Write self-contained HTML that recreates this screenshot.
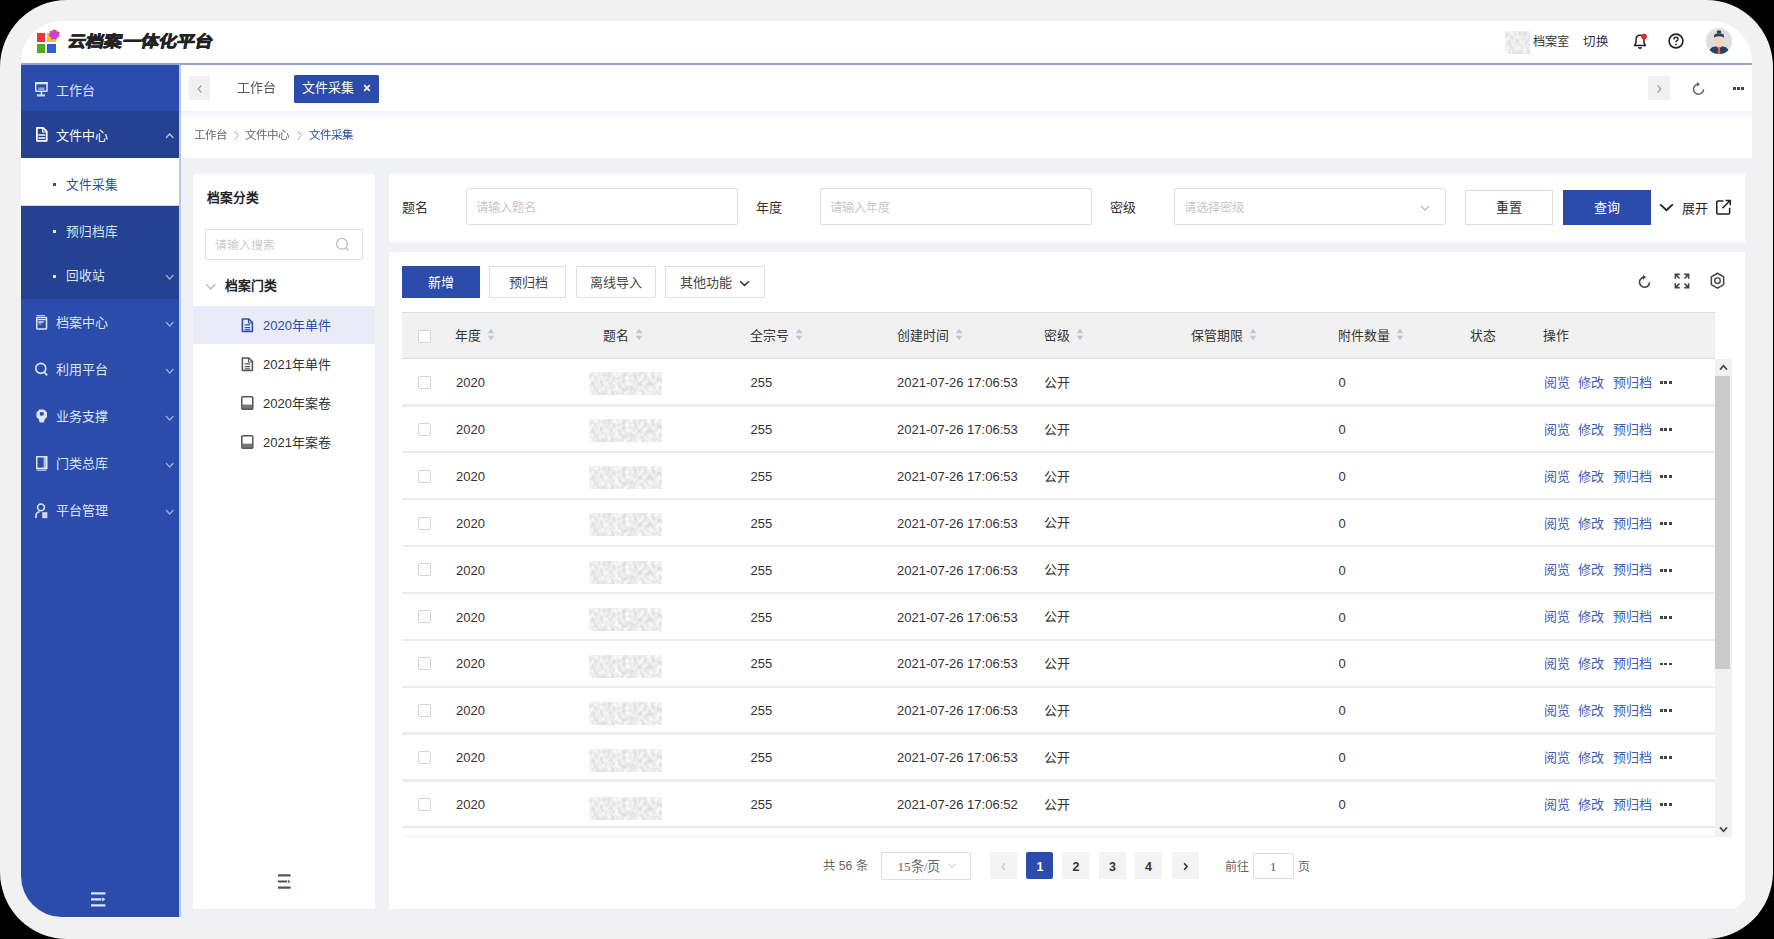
<!DOCTYPE html>
<html lang="zh-CN"><head><meta charset="utf-8"><title>云档案一体化平台</title>
<style>
html,body{margin:0;padding:0;background:#000;}
body{width:1774px;height:939px;overflow:hidden;position:relative;font-family:"Liberation Sans", sans-serif;}
#frame{position:absolute;left:0;top:0;width:1773px;height:939px;background:#f1f1f1;border-radius:67px;overflow:hidden;}
#app{position:absolute;left:21px;top:21px;width:1731px;height:896px;border-radius:41px;overflow:hidden;background:#f0f1f5;}
#abs{position:absolute;left:-21px;top:-21px;width:1774px;height:939px;filter:blur(0.55px);}
#abs div,#abs svg{position:absolute;}
#abs svg{overflow:visible;display:block;}
.t{white-space:nowrap;}
</style></head><body>
<div id="frame"><div id="app"><div id="abs">
<div style="left:21px;top:21px;width:1731px;height:42px;background:#fff"></div>
<div style="left:21px;top:63px;width:1731px;height:2.299999999999997px;background:#94a3d8"></div>
<div style="left:36.5px;top:33px;width:8.5px;height:9.200000000000003px;background:#e8363a"></div>
<div style="left:47px;top:33px;width:8.799999999999997px;height:9.200000000000003px;background:#fbc611"></div>
<div style="left:36.5px;top:43.7px;width:8.5px;height:9.0px;background:#4fae1e"></div>
<div style="left:47px;top:43.7px;width:8.799999999999997px;height:9.0px;background:#2f5fd0"></div>
<svg style="left:48.3px;top:29.200000000000003px;" width="12" height="12" viewBox="0 0 12 12"><path d="M6 0.6 L8 1.6 L10.2 1.2 L10.6 3.6 L11.6 5.6 L10 7.4 L9.6 9.8 L7.2 9.8 L5 11.2 L3.4 9.2 L1 8.4 L1.6 6 L0.6 3.8 L2.8 2.8 L3.8 0.8 Z" fill="#d63bd0" transform="rotate(20 6 6)"/></svg>
<div class="t" style="left:67.5px;top:29.799999999999997px;height:24px;line-height:24px;font-size:16px;color:#222;font-weight:900;letter-spacing:0;-webkit-text-stroke:0.7px #222;transform:skewX(-11deg) scaleX(1.135);transform-origin:0 50%;">云档案一体化平台</div>
<svg style="left:1505px;top:31px" width="25" height="23"><rect width="25" height="23" fill="#eee" filter="url(#nz)"/></svg>
<div class="t" style="left:1532.6px;top:31.799999999999997px;height:20px;line-height:20px;font-size:12.2px;color:#333;">档案室</div>
<div class="t" style="left:1583px;top:31.6px;height:20px;line-height:20px;font-size:12.5px;color:#333;">切换</div>
<svg style="left:1631.5px;top:32.5px;" width="16" height="18" viewBox="0 0 16 18"><path d="M8 2.2 C5.2 2.2 4 4.4 4 7 L4 10.2 L2.4 12.6 L13.6 12.6 L12 10.2 L12 7 C12 4.4 10.8 2.2 8 2.2 Z" fill="none" stroke="#222" stroke-width="1.5" stroke-linejoin="round"/><path d="M6.5 14.3 Q8 16.2 9.5 14.3" fill="none" stroke="#222" stroke-width="1.4"/><circle cx="12" cy="3.6" r="2.9" fill="#f5222d"/></svg>
<svg style="left:1666.6px;top:32.2px;" width="18" height="18" viewBox="0 0 18 18"><circle cx="9" cy="9" r="6.9" fill="none" stroke="#222" stroke-width="1.6"/><path d="M6.9 7.4 Q6.9 5.3 9 5.3 Q11.1 5.3 11.1 7.2 Q11.1 8.4 9 9.3 L9 10.3" fill="none" stroke="#222" stroke-width="1.4"/><circle cx="9" cy="12.3" r="0.9" fill="#222"/></svg>
<svg style="left:1705.4px;top:27.200000000000003px;" width="28" height="28" viewBox="0 0 28 28"><defs><clipPath id="av"><circle cx="14" cy="14" r="13.1"/></clipPath></defs>
<circle cx="14" cy="14" r="13.1" fill="#dddee1"/>
<g clip-path="url(#av)">
<path d="M4.2 27 Q3.6 20.4 9.6 19.4 L18.4 19.4 Q24.4 20.4 23.8 27 Z" fill="#26425f"/>
<path d="M11.4 18.6 L14 22.6 L16.6 18.6 Z" fill="#e8ecf0"/>
<path d="M13.2 19.8 L14.8 19.8 L15.3 26.6 L14 27.6 L12.7 26.6 Z" fill="#ef5a62"/>
<rect x="12.1" y="15" width="3.8" height="4.6" fill="#f5c8ad"/>
<rect x="9.2" y="8.4" width="9.6" height="9.4" rx="3.6" fill="#fbd3bc"/>
<path d="M9 11 L9 9 Q9 6.2 14 6.2 Q19 6.2 19 9 L19 11 Q18.4 9.2 14 9.2 Q9.6 9.2 9 11 Z" fill="#26425f"/>
<rect x="11.9" y="3.6" width="4.2" height="2.6" rx="1" fill="#26425f"/>
</g></svg>
<div style="left:21px;top:65px;width:158px;height:852px;background:#2b4cab"></div>
<div style="left:179px;top:65px;width:2.1999999999999886px;height:852px;background:#bcc5ea"></div>
<div style="left:21px;top:111px;width:158px;height:47px;background:#254192"></div>
<div style="left:21px;top:158px;width:158px;height:46.5px;background:#fff"></div>
<div style="left:21px;top:204.5px;width:158px;height:1.5px;background:#d3d9ee"></div>
<div style="left:21px;top:206px;width:158px;height:93px;background:#254192"></div>
<div class="t" style="left:56px;top:81.0px;height:20px;line-height:20px;font-size:13px;color:#dfe5f8;">工作台</div>
<div class="t" style="left:56px;top:125.69999999999999px;height:20px;line-height:20px;font-size:13px;color:#fff;">文件中心</div>
<svg style="left:165.3px;top:132.5px;" width="9.4" height="6" viewBox="0 0 9.4 6"><path d="M1 5 L4.7 1 L8.4 5" fill="none" stroke="#c3cbea" stroke-width="1.2"/></svg>
<div class="t" style="left:66px;top:174.8px;height:20px;line-height:20px;font-size:12.7px;color:#2b4cab;">文件采集</div>
<div style="left:52.6px;top:183px;width:3.0px;height:3px;background:#2b4cab"></div>
<div class="t" style="left:66px;top:221.7px;height:20px;line-height:20px;font-size:12.7px;color:#dfe5f8;">预归档库</div>
<div style="left:52.6px;top:229.5px;width:3.0px;height:3.0px;background:#e8ecf8"></div>
<div class="t" style="left:66px;top:266.2px;height:20px;line-height:20px;font-size:12.7px;color:#dfe5f8;">回收站</div>
<div style="left:52.6px;top:274.5px;width:3.0px;height:3.0px;background:#e8ecf8"></div>
<svg style="left:165.3px;top:274.0px;" width="9.4" height="6" viewBox="0 0 9.4 6"><path d="M1 1 L4.7 5 L8.4 1" fill="none" stroke="#a3afdc" stroke-width="1.2"/></svg>
<div class="t" style="left:56px;top:312.9px;height:20px;line-height:20px;font-size:13px;color:#dfe5f8;">档案中心</div>
<svg style="left:165.3px;top:320.9px;" width="9.4" height="6" viewBox="0 0 9.4 6"><path d="M1 1 L4.7 5 L8.4 1" fill="none" stroke="#a3afdc" stroke-width="1.2"/></svg>
<div class="t" style="left:56px;top:360.0px;height:20px;line-height:20px;font-size:13px;color:#dfe5f8;">利用平台</div>
<svg style="left:165.3px;top:368.0px;" width="9.4" height="6" viewBox="0 0 9.4 6"><path d="M1 1 L4.7 5 L8.4 1" fill="none" stroke="#a3afdc" stroke-width="1.2"/></svg>
<div class="t" style="left:56px;top:407.0px;height:20px;line-height:20px;font-size:13px;color:#dfe5f8;">业务支撑</div>
<svg style="left:165.3px;top:415.0px;" width="9.4" height="6" viewBox="0 0 9.4 6"><path d="M1 1 L4.7 5 L8.4 1" fill="none" stroke="#a3afdc" stroke-width="1.2"/></svg>
<div class="t" style="left:56px;top:454.0px;height:20px;line-height:20px;font-size:13px;color:#dfe5f8;">门类总库</div>
<svg style="left:165.3px;top:462.0px;" width="9.4" height="6" viewBox="0 0 9.4 6"><path d="M1 1 L4.7 5 L8.4 1" fill="none" stroke="#a3afdc" stroke-width="1.2"/></svg>
<div class="t" style="left:56px;top:500.6px;height:20px;line-height:20px;font-size:13px;color:#dfe5f8;">平台管理</div>
<svg style="left:165.3px;top:508.6px;" width="9.4" height="6" viewBox="0 0 9.4 6"><path d="M1 1 L4.7 5 L8.4 1" fill="none" stroke="#a3afdc" stroke-width="1.2"/></svg>
<svg style="left:35px;top:82px" width="12.8" height="14.7" viewBox="0 0 12.8 14.7"><rect x="0.75" y="0.75" width="11.3" height="8.6" rx="0.6" fill="none" stroke="#dfe5f8" stroke-width="1.5"/><rect x="0" y="0" width="12.8" height="2.3" fill="#dfe5f8"/><rect x="3.4" y="5.4" width="6" height="2.6" fill="#dfe5f8" opacity=".55"/><path d="M6.4 9.6 L6.4 12.6" stroke="#dfe5f8" stroke-width="1.5"/><rect x="1.9" y="12.3" width="8" height="2.2" fill="#dfe5f8" opacity=".9"/></svg>
<svg style="left:35.6px;top:127.3px" width="11.6" height="14.7" viewBox="0 0 11.6 14.7"><path d="M0.9 0.9 L7.2 0.9 L10.7 4.4 L10.7 13.8 L0.9 13.8 Z" fill="none" stroke="#fff" stroke-width="1.8" stroke-linejoin="round"/><path d="M2.4 8 L9.2 8 M2.4 10.9 L9.2 10.9" stroke="#fff" stroke-width="1.5"/><path d="M6.6 0.9 L6.6 5 L10.7 5" fill="none" stroke="#fff" stroke-width="1.2"/></svg>
<svg style="left:35.7px;top:315.2px" width="11.3" height="14.7" viewBox="0 0 11.3 14.7"><rect x="0.75" y="2.5" width="9.8" height="11.4" rx="0.6" fill="none" stroke="#dfe5f8" stroke-width="1.5"/><path d="M0.6 0.6 L9 0.6" stroke="#dfe5f8" stroke-width="1.2" opacity=".8"/><path d="M1.4 4.6 L9.9 4.6 M2.4 7 L7.6 7" stroke="#dfe5f8" stroke-width="1.3"/><path d="M2.4 9 L6 9" stroke="#dfe5f8" stroke-width="1" opacity=".7"/></svg>
<svg style="left:35px;top:362.1px" width="12.6" height="13.9" viewBox="0 0 12.6 13.9"><circle cx="5.8" cy="6.4" r="5" fill="none" stroke="#dfe5f8" stroke-width="1.6"/><path d="M9.4 10.4 L12.2 13.4" stroke="#dfe5f8" stroke-width="1.7"/></svg>
<svg style="left:35.7px;top:409.4px" width="11.5" height="14.1" viewBox="0 0 11.5 14.1"><path d="M3.4 0.6 L8.1 0.6 L11 3.4 L11 8 L8.4 10.8 L8.4 12 L7.6 13.6 L3.9 13.6 L3.1 12 L3.1 10.8 L0.5 8 L0.5 3.4 Z" fill="#dfe5f8"/><rect x="3.9" y="3.2" width="3.7" height="3.3" fill="#2b4cab"/></svg>
<svg style="left:35.7px;top:455.9px" width="11.5" height="15" viewBox="0 0 11.5 15"><rect x="0.75" y="0.75" width="10" height="11.6" fill="none" stroke="#dfe5f8" stroke-width="1.5"/><rect x="7.6" y="0.8" width="3.4" height="11.4" fill="#dfe5f8" opacity=".75"/><path d="M0.6 13 L10.8 13" stroke="#dfe5f8" stroke-width="1.1" opacity=".8"/><path d="M0.8 14.5 L10.4 14.5" stroke="#dfe5f8" stroke-width="1" opacity=".7"/></svg>
<svg style="left:35.2px;top:502.9px" width="12.4" height="15.2" viewBox="0 0 12.4 15.2"><circle cx="6" cy="4.4" r="3.4" fill="none" stroke="#dfe5f8" stroke-width="1.6"/><path d="M0.9 15 L0.9 13.4 Q0.9 9.4 4.6 8.8" fill="none" stroke="#dfe5f8" stroke-width="1.6"/><rect x="7.2" y="9.2" width="5.2" height="6" fill="#dfe5f8" opacity=".9"/></svg>
<svg style="left:90.89999999999999px;top:892.2px;" width="14.4" height="14.6" viewBox="0 0 14.4 14.6"><path d="M0 1.3 L14.4 1.3 M0 7.3 L10.4 7.3 M0 13.3 L14.4 13.3" stroke="#dfe5f8" stroke-width="2.3"/><path d="M11.2 5.2 L14.4 7.3 L11.2 9.4 Z" fill="#dfe5f8"/></svg>
<div style="left:181px;top:65px;width:1571px;height:47px;background:#fff"></div>
<div style="left:181px;top:111px;width:1571px;height:9px;background:linear-gradient(#f1f3f9,#f6f7fb 45%,#fff)"></div>
<div style="left:181px;top:120px;width:1571px;height:38px;background:#fff"></div>
<div style="left:189px;top:76px;width:21px;height:24px;background:#f0f0f0"></div>
<svg style="left:196.0px;top:83.5px;" width="8" height="10" viewBox="0 0 8 10"><path d="M5.4 1.4 L2.2 5 L5.4 8.6" fill="none" stroke="#9a9a9a" stroke-width="1.2"/></svg>
<div class="t" style="left:237px;top:78.4px;height:20px;line-height:20px;font-size:13px;color:#555;">工作台</div>
<div style="left:294px;top:75px;width:85px;height:27.5px;background:#2b4cab;border-radius:1.5px"></div>
<div class="t" style="left:302px;top:78.1px;height:20px;line-height:20px;font-size:13px;color:#fff;">文件采集</div>
<svg style="left:362.5px;top:84.2px;" width="8" height="8" viewBox="0 0 8 8"><path d="M1.2 1.2 L6.8 6.8 M6.8 1.2 L1.2 6.8" stroke="#fff" stroke-width="1.7"/></svg>
<div style="left:1648px;top:76px;width:22px;height:24px;background:#f0f0f0"></div>
<svg style="left:1655.0px;top:83.5px;" width="8" height="10" viewBox="0 0 8 10"><path d="M2.6 1.4 L5.8 5 L2.6 8.6" fill="none" stroke="#9a9a9a" stroke-width="1.2"/></svg>
<svg style="left:1691.0px;top:80.6px;" width="15" height="15" viewBox="0 0 14 14"><path d="M7.6 3 A4.7 4.7 0 1 0 11.7 7.6" fill="none" stroke="#666" stroke-width="1.4"/><path d="M5.6 0.6 L8.4 3 L5.6 5.4 Z" fill="#666"/></svg>
<div style="left:1732.5px;top:87.2px;width:3.2000000000000455px;height:2.3999999999999915px;background:#444"></div>
<div style="left:1736.9px;top:87.2px;width:3.199999999999818px;height:2.3999999999999915px;background:#444"></div>
<div style="left:1741.3px;top:87.2px;width:3.2000000000000455px;height:2.3999999999999915px;background:#444"></div>
<div class="t" style="left:193.5px;top:125.30000000000001px;height:20px;line-height:20px;font-size:11.5px;color:#666;">工作台</div>
<svg style="left:232.5px;top:129.8px;" width="7" height="11" viewBox="0 0 7 11"><path d="M1.4 1 L5.4 5.5 L1.4 10" fill="none" stroke="#aaa" stroke-width="1"/></svg>
<div class="t" style="left:245px;top:125.30000000000001px;height:20px;line-height:20px;font-size:11.5px;color:#666;">文件中心</div>
<svg style="left:295.5px;top:129.8px;" width="7" height="11" viewBox="0 0 7 11"><path d="M1.4 1 L5.4 5.5 L1.4 10" fill="none" stroke="#aaa" stroke-width="1"/></svg>
<div class="t" style="left:309px;top:125.30000000000001px;height:20px;line-height:20px;font-size:11.5px;color:#2b4cab;">文件采集</div>
<div style="left:181px;top:158px;width:1571px;height:759px;background:#f0f1f5"></div>
<div style="left:193.4px;top:174px;width:181.6px;height:735px;background:#fff"></div>
<div class="t" style="left:206.6px;top:188.0px;height:20px;line-height:20px;font-size:12.7px;color:#222;font-weight:bold">档案分类</div>
<div style="left:205.2px;top:229.2px;width:157.5px;height:30.900000000000034px;background:#fff;border:1.6px solid #e0e0e0;box-sizing:border-box;border-radius:2px"></div>
<div class="t" style="left:214.9px;top:234.6px;height:20px;line-height:20px;font-size:11.9px;color:#cbcbcb;">请输入搜索</div>
<svg style="left:335.0px;top:237.1px;" width="15" height="15" viewBox="0 0 15 15"><circle cx="7" cy="6.8" r="5.4" fill="none" stroke="#bdbdbd" stroke-width="1.3"/><path d="M10.8 10.8 L13.4 13.4" stroke="#bdbdbd" stroke-width="1.4"/></svg>
<svg style="left:205.4px;top:282.5px;" width="11.4" height="7" viewBox="0 0 11.4 7"><path d="M1 1 L5.7 6 L10.4 1" fill="none" stroke="#aaa" stroke-width="1.1"/></svg>
<div class="t" style="left:225.2px;top:276.1px;height:20px;line-height:20px;font-size:12.8px;color:#222;font-weight:bold">档案门类</div>
<div style="left:193.4px;top:305.5px;width:181.6px;height:38.19999999999999px;background:#e9ecf7"></div>
<svg style="left:241.2px;top:317.7px;" width="12.8" height="14.6" viewBox="0 0 12 14"><path d="M1.2 1 L7.4 1 L10.8 4.4 L10.8 13 L1.2 13 Z" fill="none" stroke="#2b4cab" stroke-width="1.5" stroke-linejoin="round"/><path d="M3.4 6.6 L8.6 6.6 M3.4 9.2 L8.6 9.2 M3.4 11.4 L8.6 11.4" stroke="#2b4cab" stroke-width="1.1"/><path d="M7 1 L7 4.8 L10.8 4.8" fill="none" stroke="#2b4cab" stroke-width="1"/></svg>
<div class="t" style="left:263px;top:315.6px;height:20px;line-height:20px;font-size:13px;color:#2b4cab;">2020年单件</div>
<svg style="left:241.2px;top:356.7px;" width="12.8" height="14.6" viewBox="0 0 12 14"><path d="M1.2 1 L7.4 1 L10.8 4.4 L10.8 13 L1.2 13 Z" fill="none" stroke="#555" stroke-width="1.5" stroke-linejoin="round"/><path d="M3.4 6.6 L8.6 6.6 M3.4 9.2 L8.6 9.2 M3.4 11.4 L8.6 11.4" stroke="#555" stroke-width="1.1"/><path d="M7 1 L7 4.8 L10.8 4.8" fill="none" stroke="#555" stroke-width="1"/></svg>
<div class="t" style="left:263px;top:354.6px;height:20px;line-height:20px;font-size:13px;color:#333;">2021年单件</div>
<svg style="left:241.29999999999998px;top:396.0px;" width="12.6" height="14" viewBox="0 0 12.6 14"><rect x="0.8" y="0.8" width="11" height="12.4" rx="1" fill="none" stroke="#555" stroke-width="1.5"/><rect x="1.2" y="8.6" width="10.2" height="4.4" fill="#555" opacity=".8"/></svg>
<div class="t" style="left:263px;top:393.7px;height:20px;line-height:20px;font-size:13px;color:#333;">2020年案卷</div>
<svg style="left:241.29999999999998px;top:435.0px;" width="12.6" height="14" viewBox="0 0 12.6 14"><rect x="0.8" y="0.8" width="11" height="12.4" rx="1" fill="none" stroke="#555" stroke-width="1.5"/><rect x="1.2" y="8.6" width="10.2" height="4.4" fill="#555" opacity=".8"/></svg>
<div class="t" style="left:263px;top:432.6px;height:20px;line-height:20px;font-size:13px;color:#333;">2021年案卷</div>
<svg style="left:277.59999999999997px;top:873.7px;" width="12.6" height="15" viewBox="0 0 12.6 15"><path d="M0 1.3 L12.6 1.3 M0 7.5 L9 7.5 M0 13.7 L12.6 13.7" stroke="#555" stroke-width="2.2"/><path d="M9.8 5.4 L12.6 7.5 L9.8 9.6 Z" fill="#8a6a3a"/></svg>
<div style="left:388.5px;top:174px;width:1356.5px;height:67.5px;background:#fff"></div>
<div class="t" style="left:402px;top:198.0px;height:20px;line-height:20px;font-size:13px;color:#333;">题名</div>
<div style="left:465.5px;top:187.5px;width:272.0px;height:37.5px;background:#fff;border:1.6px solid #dedede;box-sizing:border-box;border-radius:2px"></div>
<div class="t" style="left:476px;top:198.0px;height:20px;line-height:20px;font-size:12.3px;color:#c8c8c8;">请输入题名</div>
<div class="t" style="left:755.8px;top:198.0px;height:20px;line-height:20px;font-size:13px;color:#333;">年度</div>
<div style="left:819.5px;top:187.5px;width:272.5px;height:37.5px;background:#fff;border:1.6px solid #dedede;box-sizing:border-box;border-radius:2px"></div>
<div class="t" style="left:830px;top:198.0px;height:20px;line-height:20px;font-size:12.3px;color:#c8c8c8;">请输入年度</div>
<div class="t" style="left:1109.8px;top:198.0px;height:20px;line-height:20px;font-size:13px;color:#333;">密级</div>
<div style="left:1174px;top:187.5px;width:271.5px;height:37.5px;background:#fff;border:1.6px solid #dedede;box-sizing:border-box;border-radius:2px"></div>
<div class="t" style="left:1184px;top:198.0px;height:20px;line-height:20px;font-size:12.3px;color:#c8c8c8;">请选择密级</div>
<svg style="left:1420.0px;top:204.8px;" width="10" height="6" viewBox="0 0 10 6"><path d="M1 1 L5.0 5 L9 1" fill="none" stroke="#b5b5b5" stroke-width="1.1"/></svg>
<div style="left:1464.5px;top:190px;width:88.5px;height:35px;background:#fff;border:1px solid #dcdcdc;box-sizing:border-box"></div>
<div class="t" style="left:1408.7px;width:200px;text-align:center;top:198.4px;height:20px;line-height:20px;font-size:13px;color:#333;">重置</div>
<div style="left:1563px;top:190px;width:88.29999999999995px;height:35px;background:#2b4cab"></div>
<div class="t" style="left:1507.2px;width:200px;text-align:center;top:198.4px;height:20px;line-height:20px;font-size:13px;color:#fff;">查询</div>
<svg style="left:1659.1px;top:203.1px;" width="15" height="9" viewBox="0 0 15 9"><path d="M1.2 1.4 L7.5 7.2 L13.8 1.4" fill="none" stroke="#222" stroke-width="1.8"/></svg>
<div class="t" style="left:1681.6px;top:199.0px;height:20px;line-height:20px;font-size:13px;color:#222;">展开</div>
<svg style="left:1715.0px;top:199.4px;" width="17" height="16.4" viewBox="0 0 16 16"><path d="M8 2 L2.6 2 Q1.4 2 1.4 3.2 L1.4 13.4 Q1.4 14.6 2.6 14.6 L12.8 14.6 Q14 14.6 14 13.4 L14 8.6" fill="none" stroke="#222" stroke-width="1.5"/><path d="M7 9 L14 2 M10 1.4 L14.6 1.4 L14.6 6" fill="none" stroke="#222" stroke-width="1.5"/></svg>
<div style="left:388.5px;top:252.2px;width:1356.5px;height:656.8px;background:#fff"></div>
<div style="left:402px;top:266.2px;width:77.5px;height:31.600000000000023px;background:#2b4cab"></div>
<div class="t" style="left:340.7px;width:200px;text-align:center;top:272.6px;height:20px;line-height:20px;font-size:13px;color:#fff;">新增</div>
<div style="left:489.3px;top:266.2px;width:77.19999999999999px;height:31.600000000000023px;background:#fff;border:1px solid #dddfe6;box-sizing:border-box;border-radius:1px"></div>
<div class="t" style="left:428px;width:200px;text-align:center;top:272.6px;height:20px;line-height:20px;font-size:13px;color:#444;">预归档</div>
<div style="left:576px;top:266.2px;width:80.29999999999995px;height:31.600000000000023px;background:#fff;border:1px solid #dddfe6;box-sizing:border-box;border-radius:1px"></div>
<div class="t" style="left:516.2px;width:200px;text-align:center;top:272.6px;height:20px;line-height:20px;font-size:13px;color:#444;">离线导入</div>
<div style="left:665px;top:266.2px;width:99.5px;height:31.600000000000023px;background:#fff;border:1px solid #dddfe6;box-sizing:border-box;border-radius:1px"></div>
<div class="t" style="left:679.5px;top:272.6px;height:20px;line-height:20px;font-size:13px;color:#444;">其他功能</div>
<svg style="left:739.3px;top:279.8px;" width="11" height="7" viewBox="0 0 11 7"><path d="M1 1.2 L5.5 5.4 L10 1.2" fill="none" stroke="#333" stroke-width="1.5"/></svg>
<svg style="left:1637.1px;top:273.5px;" width="15" height="15" viewBox="0 0 14 14"><path d="M7.6 3 A4.7 4.7 0 1 0 11.7 7.6" fill="none" stroke="#444" stroke-width="1.5"/><path d="M5.6 0.6 L8.4 3 L5.6 5.4 Z" fill="#444"/></svg>
<svg style="left:1673.6px;top:273.0px;" width="16" height="16" viewBox="0 0 14 14"><path d="M5.0 1.2 L1.2 1.2 L1.2 5.0 M1.2 1.2 L4.8 4.8" fill="none" stroke="#444" stroke-width="1.4"/><path d="M9.0 1.2 L12.8 1.2 L12.8 5.0 M12.8 1.2 L9.200000000000001 4.8" fill="none" stroke="#444" stroke-width="1.4"/><path d="M5.0 12.8 L1.2 12.8 L1.2 9.0 M1.2 12.8 L4.8 9.200000000000001" fill="none" stroke="#444" stroke-width="1.4"/><path d="M9.0 12.8 L12.8 12.8 L12.8 9.0 M12.8 12.8 L9.200000000000001 9.200000000000001" fill="none" stroke="#444" stroke-width="1.4"/></svg>
<svg style="left:1709.0px;top:272.3px;" width="17" height="17.4" viewBox="0 0 16 16"><path d="M8 1 L13.8 4.4 L13.8 11.6 L8 15 L2.2 11.6 L2.2 4.4 Z" fill="none" stroke="#444" stroke-width="1.4" stroke-linejoin="round"/><circle cx="8" cy="8" r="2.6" fill="none" stroke="#444" stroke-width="1.3"/></svg>
<div style="left:402px;top:312px;width:1313px;height:47px;background:#f1f1f1"></div>
<div style="left:402px;top:311.5px;width:1313px;height:1.5px;background:#dddddd"></div>
<div style="left:402px;top:357.6px;width:1313px;height:1.599999999999966px;background:#dcdcdc"></div>
<div style="left:418.3px;top:329.8px;width:13.0px;height:13.0px;background:#fff;border:1px solid #d4d4d4;box-sizing:border-box;border-radius:2px"></div>
<div class="t" style="left:455.2px;top:326.3px;height:20px;line-height:20px;font-size:12.9px;color:#333;">年度</div>
<svg style="left:487.4px;top:328.1px;" width="8" height="13" viewBox="0 0 8 13"><path d="M4 0.8 L7.4 5.2 L0.6 5.2 Z" fill="#c0c6d4"/><path d="M4 12.2 L7.4 7.8 L0.6 7.8 Z" fill="#c0c6d4"/></svg>
<div class="t" style="left:602.7px;top:326.3px;height:20px;line-height:20px;font-size:12.9px;color:#333;">题名</div>
<svg style="left:634.9px;top:328.1px;" width="8" height="13" viewBox="0 0 8 13"><path d="M4 0.8 L7.4 5.2 L0.6 5.2 Z" fill="#c0c6d4"/><path d="M4 12.2 L7.4 7.8 L0.6 7.8 Z" fill="#c0c6d4"/></svg>
<div class="t" style="left:749.7px;top:326.3px;height:20px;line-height:20px;font-size:12.9px;color:#333;">全宗号</div>
<svg style="left:794.9px;top:328.1px;" width="8" height="13" viewBox="0 0 8 13"><path d="M4 0.8 L7.4 5.2 L0.6 5.2 Z" fill="#c0c6d4"/><path d="M4 12.2 L7.4 7.8 L0.6 7.8 Z" fill="#c0c6d4"/></svg>
<div class="t" style="left:896.7px;top:326.3px;height:20px;line-height:20px;font-size:12.9px;color:#333;">创建时间</div>
<svg style="left:954.9px;top:328.1px;" width="8" height="13" viewBox="0 0 8 13"><path d="M4 0.8 L7.4 5.2 L0.6 5.2 Z" fill="#c0c6d4"/><path d="M4 12.2 L7.4 7.8 L0.6 7.8 Z" fill="#c0c6d4"/></svg>
<div class="t" style="left:1043.7px;top:326.3px;height:20px;line-height:20px;font-size:12.9px;color:#333;">密级</div>
<svg style="left:1075.9px;top:328.1px;" width="8" height="13" viewBox="0 0 8 13"><path d="M4 0.8 L7.4 5.2 L0.6 5.2 Z" fill="#c0c6d4"/><path d="M4 12.2 L7.4 7.8 L0.6 7.8 Z" fill="#c0c6d4"/></svg>
<div class="t" style="left:1190.7px;top:326.3px;height:20px;line-height:20px;font-size:12.9px;color:#333;">保管期限</div>
<svg style="left:1248.9px;top:328.1px;" width="8" height="13" viewBox="0 0 8 13"><path d="M4 0.8 L7.4 5.2 L0.6 5.2 Z" fill="#c0c6d4"/><path d="M4 12.2 L7.4 7.8 L0.6 7.8 Z" fill="#c0c6d4"/></svg>
<div class="t" style="left:1337.7px;top:326.3px;height:20px;line-height:20px;font-size:12.9px;color:#333;">附件数量</div>
<svg style="left:1395.9px;top:328.1px;" width="8" height="13" viewBox="0 0 8 13"><path d="M4 0.8 L7.4 5.2 L0.6 5.2 Z" fill="#c0c6d4"/><path d="M4 12.2 L7.4 7.8 L0.6 7.8 Z" fill="#c0c6d4"/></svg>
<div class="t" style="left:1470.2px;top:326.3px;height:20px;line-height:20px;font-size:12.9px;color:#333;">状态</div>
<div class="t" style="left:1542.7px;top:326.3px;height:20px;line-height:20px;font-size:12.9px;color:#333;">操作</div>
<svg width="0" height="0" style="left:0;top:0"><defs><filter id="nz" x="0" y="0" width="100%" height="100%" color-interpolation-filters="sRGB"><feTurbulence type="fractalNoise" baseFrequency="0.27 0.2" numOctaves="2" seed="7"/><feColorMatrix type="matrix" values="0.24 0 0 0 0.805  0.24 0 0 0 0.805  0.24 0 0 0 0.805  0 0 0 0 1"/></filter></defs></svg>
<div style="left:402px;top:404.4px;width:1313px;height:2.2000000000000455px;background:#ececec"></div>
<div style="left:418.3px;top:376.0px;width:13.0px;height:13.0px;background:#fff;border:1px solid #d4d4d4;box-sizing:border-box;border-radius:2px"></div>
<div class="t" style="left:456px;top:373.2px;height:20px;line-height:20px;font-size:13px;color:#333;">2020</div>
<svg style="left:589px;top:371.80px" width="73" height="23"><rect width="73" height="23" fill="#eeeeee" filter="url(#nz)"/></svg>
<div class="t" style="left:750.5px;top:373.2px;height:20px;line-height:20px;font-size:13px;color:#333;">255</div>
<div class="t" style="left:897px;top:373.2px;height:20px;line-height:20px;font-size:13px;color:#333;">2021-07-26 17:06:53</div>
<div class="t" style="left:1044px;top:372.8px;height:20px;line-height:20px;font-size:13px;color:#333;">公开</div>
<div class="t" style="left:1338.5px;top:373.2px;height:20px;line-height:20px;font-size:13px;color:#333;">0</div>
<div class="t" style="left:1543.7px;top:373.0px;height:20px;line-height:20px;font-size:13px;color:#3d5cb8;">阅览</div>
<div class="t" style="left:1578.3px;top:373.0px;height:20px;line-height:20px;font-size:13px;color:#3d5cb8;">修改</div>
<div class="t" style="left:1612.8px;top:373.0px;height:20px;line-height:20px;font-size:13px;color:#3d5cb8;">预归档</div>
<div style="left:1660.0px;top:381.4px;width:3.2000000000000455px;height:2.8000000000000114px;background:#444"></div>
<div style="left:1664.3px;top:381.4px;width:3.2000000000000455px;height:2.8000000000000114px;background:#444"></div>
<div style="left:1668.6px;top:381.4px;width:3.2000000000000455px;height:2.8000000000000114px;background:#444"></div>
<div style="left:402px;top:451.27px;width:1313px;height:2.2000000000000455px;background:#ececec"></div>
<div style="left:418.3px;top:422.87px;width:13.0px;height:13.0px;background:#fff;border:1px solid #d4d4d4;box-sizing:border-box;border-radius:2px"></div>
<div class="t" style="left:456px;top:420.07px;height:20px;line-height:20px;font-size:13px;color:#333;">2020</div>
<svg style="left:589px;top:419.00px" width="73" height="23"><rect width="73" height="23" fill="#eeeeee" filter="url(#nz)"/></svg>
<div class="t" style="left:750.5px;top:420.07px;height:20px;line-height:20px;font-size:13px;color:#333;">255</div>
<div class="t" style="left:897px;top:420.07px;height:20px;line-height:20px;font-size:13px;color:#333;">2021-07-26 17:06:53</div>
<div class="t" style="left:1044px;top:419.67px;height:20px;line-height:20px;font-size:13px;color:#333;">公开</div>
<div class="t" style="left:1338.5px;top:420.07px;height:20px;line-height:20px;font-size:13px;color:#333;">0</div>
<div class="t" style="left:1543.7px;top:419.87px;height:20px;line-height:20px;font-size:13px;color:#3d5cb8;">阅览</div>
<div class="t" style="left:1578.3px;top:419.87px;height:20px;line-height:20px;font-size:13px;color:#3d5cb8;">修改</div>
<div class="t" style="left:1612.8px;top:419.87px;height:20px;line-height:20px;font-size:13px;color:#3d5cb8;">预归档</div>
<div style="left:1660.0px;top:428.27px;width:3.2000000000000455px;height:2.8000000000000114px;background:#444"></div>
<div style="left:1664.3px;top:428.27px;width:3.2000000000000455px;height:2.8000000000000114px;background:#444"></div>
<div style="left:1668.6px;top:428.27px;width:3.2000000000000455px;height:2.8000000000000114px;background:#444"></div>
<div style="left:402px;top:498.14px;width:1313px;height:2.2000000000000455px;background:#ececec"></div>
<div style="left:418.3px;top:469.74px;width:13.0px;height:13.0px;background:#fff;border:1px solid #d4d4d4;box-sizing:border-box;border-radius:2px"></div>
<div class="t" style="left:456px;top:466.94px;height:20px;line-height:20px;font-size:13px;color:#333;">2020</div>
<svg style="left:589px;top:466.20px" width="73" height="23"><rect width="73" height="23" fill="#eeeeee" filter="url(#nz)"/></svg>
<div class="t" style="left:750.5px;top:466.94px;height:20px;line-height:20px;font-size:13px;color:#333;">255</div>
<div class="t" style="left:897px;top:466.94px;height:20px;line-height:20px;font-size:13px;color:#333;">2021-07-26 17:06:53</div>
<div class="t" style="left:1044px;top:466.54px;height:20px;line-height:20px;font-size:13px;color:#333;">公开</div>
<div class="t" style="left:1338.5px;top:466.94px;height:20px;line-height:20px;font-size:13px;color:#333;">0</div>
<div class="t" style="left:1543.7px;top:466.74px;height:20px;line-height:20px;font-size:13px;color:#3d5cb8;">阅览</div>
<div class="t" style="left:1578.3px;top:466.74px;height:20px;line-height:20px;font-size:13px;color:#3d5cb8;">修改</div>
<div class="t" style="left:1612.8px;top:466.74px;height:20px;line-height:20px;font-size:13px;color:#3d5cb8;">预归档</div>
<div style="left:1660.0px;top:475.14px;width:3.2000000000000455px;height:2.8000000000000114px;background:#444"></div>
<div style="left:1664.3px;top:475.14px;width:3.2000000000000455px;height:2.8000000000000114px;background:#444"></div>
<div style="left:1668.6px;top:475.14px;width:3.2000000000000455px;height:2.8000000000000114px;background:#444"></div>
<div style="left:402px;top:545.01px;width:1313px;height:2.2000000000000455px;background:#ececec"></div>
<div style="left:418.3px;top:516.6099999999999px;width:13.0px;height:13.0px;background:#fff;border:1px solid #d4d4d4;box-sizing:border-box;border-radius:2px"></div>
<div class="t" style="left:456px;top:513.81px;height:20px;line-height:20px;font-size:13px;color:#333;">2020</div>
<svg style="left:589px;top:513.40px" width="73" height="23"><rect width="73" height="23" fill="#eeeeee" filter="url(#nz)"/></svg>
<div class="t" style="left:750.5px;top:513.81px;height:20px;line-height:20px;font-size:13px;color:#333;">255</div>
<div class="t" style="left:897px;top:513.81px;height:20px;line-height:20px;font-size:13px;color:#333;">2021-07-26 17:06:53</div>
<div class="t" style="left:1044px;top:513.41px;height:20px;line-height:20px;font-size:13px;color:#333;">公开</div>
<div class="t" style="left:1338.5px;top:513.81px;height:20px;line-height:20px;font-size:13px;color:#333;">0</div>
<div class="t" style="left:1543.7px;top:513.6099999999999px;height:20px;line-height:20px;font-size:13px;color:#3d5cb8;">阅览</div>
<div class="t" style="left:1578.3px;top:513.6099999999999px;height:20px;line-height:20px;font-size:13px;color:#3d5cb8;">修改</div>
<div class="t" style="left:1612.8px;top:513.6099999999999px;height:20px;line-height:20px;font-size:13px;color:#3d5cb8;">预归档</div>
<div style="left:1660.0px;top:522.01px;width:3.2000000000000455px;height:2.7999999999999545px;background:#444"></div>
<div style="left:1664.3px;top:522.01px;width:3.2000000000000455px;height:2.7999999999999545px;background:#444"></div>
<div style="left:1668.6px;top:522.01px;width:3.2000000000000455px;height:2.7999999999999545px;background:#444"></div>
<div style="left:402px;top:591.88px;width:1313px;height:2.2000000000000455px;background:#ececec"></div>
<div style="left:418.3px;top:563.4799999999999px;width:13.0px;height:13.0px;background:#fff;border:1px solid #d4d4d4;box-sizing:border-box;border-radius:2px"></div>
<div class="t" style="left:456px;top:560.68px;height:20px;line-height:20px;font-size:13px;color:#333;">2020</div>
<svg style="left:589px;top:560.60px" width="73" height="23"><rect width="73" height="23" fill="#eeeeee" filter="url(#nz)"/></svg>
<div class="t" style="left:750.5px;top:560.68px;height:20px;line-height:20px;font-size:13px;color:#333;">255</div>
<div class="t" style="left:897px;top:560.68px;height:20px;line-height:20px;font-size:13px;color:#333;">2021-07-26 17:06:53</div>
<div class="t" style="left:1044px;top:560.28px;height:20px;line-height:20px;font-size:13px;color:#333;">公开</div>
<div class="t" style="left:1338.5px;top:560.68px;height:20px;line-height:20px;font-size:13px;color:#333;">0</div>
<div class="t" style="left:1543.7px;top:560.4799999999999px;height:20px;line-height:20px;font-size:13px;color:#3d5cb8;">阅览</div>
<div class="t" style="left:1578.3px;top:560.4799999999999px;height:20px;line-height:20px;font-size:13px;color:#3d5cb8;">修改</div>
<div class="t" style="left:1612.8px;top:560.4799999999999px;height:20px;line-height:20px;font-size:13px;color:#3d5cb8;">预归档</div>
<div style="left:1660.0px;top:568.88px;width:3.2000000000000455px;height:2.7999999999999545px;background:#444"></div>
<div style="left:1664.3px;top:568.88px;width:3.2000000000000455px;height:2.7999999999999545px;background:#444"></div>
<div style="left:1668.6px;top:568.88px;width:3.2000000000000455px;height:2.7999999999999545px;background:#444"></div>
<div style="left:402px;top:638.75px;width:1313px;height:2.2000000000000455px;background:#ececec"></div>
<div style="left:418.3px;top:610.3499999999999px;width:13.0px;height:13.0px;background:#fff;border:1px solid #d4d4d4;box-sizing:border-box;border-radius:2px"></div>
<div class="t" style="left:456px;top:607.55px;height:20px;line-height:20px;font-size:13px;color:#333;">2020</div>
<svg style="left:589px;top:607.80px" width="73" height="23"><rect width="73" height="23" fill="#eeeeee" filter="url(#nz)"/></svg>
<div class="t" style="left:750.5px;top:607.55px;height:20px;line-height:20px;font-size:13px;color:#333;">255</div>
<div class="t" style="left:897px;top:607.55px;height:20px;line-height:20px;font-size:13px;color:#333;">2021-07-26 17:06:53</div>
<div class="t" style="left:1044px;top:607.15px;height:20px;line-height:20px;font-size:13px;color:#333;">公开</div>
<div class="t" style="left:1338.5px;top:607.55px;height:20px;line-height:20px;font-size:13px;color:#333;">0</div>
<div class="t" style="left:1543.7px;top:607.3499999999999px;height:20px;line-height:20px;font-size:13px;color:#3d5cb8;">阅览</div>
<div class="t" style="left:1578.3px;top:607.3499999999999px;height:20px;line-height:20px;font-size:13px;color:#3d5cb8;">修改</div>
<div class="t" style="left:1612.8px;top:607.3499999999999px;height:20px;line-height:20px;font-size:13px;color:#3d5cb8;">预归档</div>
<div style="left:1660.0px;top:615.75px;width:3.2000000000000455px;height:2.7999999999999545px;background:#444"></div>
<div style="left:1664.3px;top:615.75px;width:3.2000000000000455px;height:2.7999999999999545px;background:#444"></div>
<div style="left:1668.6px;top:615.75px;width:3.2000000000000455px;height:2.7999999999999545px;background:#444"></div>
<div style="left:402px;top:685.62px;width:1313px;height:2.2000000000000455px;background:#ececec"></div>
<div style="left:418.3px;top:657.2199999999999px;width:13.0px;height:13.0px;background:#fff;border:1px solid #d4d4d4;box-sizing:border-box;border-radius:2px"></div>
<div class="t" style="left:456px;top:654.42px;height:20px;line-height:20px;font-size:13px;color:#333;">2020</div>
<svg style="left:589px;top:655.00px" width="73" height="23"><rect width="73" height="23" fill="#eeeeee" filter="url(#nz)"/></svg>
<div class="t" style="left:750.5px;top:654.42px;height:20px;line-height:20px;font-size:13px;color:#333;">255</div>
<div class="t" style="left:897px;top:654.42px;height:20px;line-height:20px;font-size:13px;color:#333;">2021-07-26 17:06:53</div>
<div class="t" style="left:1044px;top:654.02px;height:20px;line-height:20px;font-size:13px;color:#333;">公开</div>
<div class="t" style="left:1338.5px;top:654.42px;height:20px;line-height:20px;font-size:13px;color:#333;">0</div>
<div class="t" style="left:1543.7px;top:654.2199999999999px;height:20px;line-height:20px;font-size:13px;color:#3d5cb8;">阅览</div>
<div class="t" style="left:1578.3px;top:654.2199999999999px;height:20px;line-height:20px;font-size:13px;color:#3d5cb8;">修改</div>
<div class="t" style="left:1612.8px;top:654.2199999999999px;height:20px;line-height:20px;font-size:13px;color:#3d5cb8;">预归档</div>
<div style="left:1660.0px;top:662.62px;width:3.2000000000000455px;height:2.7999999999999545px;background:#444"></div>
<div style="left:1664.3px;top:662.62px;width:3.2000000000000455px;height:2.7999999999999545px;background:#444"></div>
<div style="left:1668.6px;top:662.62px;width:3.2000000000000455px;height:2.7999999999999545px;background:#444"></div>
<div style="left:402px;top:732.4899999999999px;width:1313px;height:2.2000000000000455px;background:#ececec"></div>
<div style="left:418.3px;top:704.0899999999999px;width:13.0px;height:13.0px;background:#fff;border:1px solid #d4d4d4;box-sizing:border-box;border-radius:2px"></div>
<div class="t" style="left:456px;top:701.29px;height:20px;line-height:20px;font-size:13px;color:#333;">2020</div>
<svg style="left:589px;top:702.20px" width="73" height="23"><rect width="73" height="23" fill="#eeeeee" filter="url(#nz)"/></svg>
<div class="t" style="left:750.5px;top:701.29px;height:20px;line-height:20px;font-size:13px;color:#333;">255</div>
<div class="t" style="left:897px;top:701.29px;height:20px;line-height:20px;font-size:13px;color:#333;">2021-07-26 17:06:53</div>
<div class="t" style="left:1044px;top:700.89px;height:20px;line-height:20px;font-size:13px;color:#333;">公开</div>
<div class="t" style="left:1338.5px;top:701.29px;height:20px;line-height:20px;font-size:13px;color:#333;">0</div>
<div class="t" style="left:1543.7px;top:701.0899999999999px;height:20px;line-height:20px;font-size:13px;color:#3d5cb8;">阅览</div>
<div class="t" style="left:1578.3px;top:701.0899999999999px;height:20px;line-height:20px;font-size:13px;color:#3d5cb8;">修改</div>
<div class="t" style="left:1612.8px;top:701.0899999999999px;height:20px;line-height:20px;font-size:13px;color:#3d5cb8;">预归档</div>
<div style="left:1660.0px;top:709.49px;width:3.2000000000000455px;height:2.7999999999999545px;background:#444"></div>
<div style="left:1664.3px;top:709.49px;width:3.2000000000000455px;height:2.7999999999999545px;background:#444"></div>
<div style="left:1668.6px;top:709.49px;width:3.2000000000000455px;height:2.7999999999999545px;background:#444"></div>
<div style="left:402px;top:779.36px;width:1313px;height:2.2000000000000455px;background:#ececec"></div>
<div style="left:418.3px;top:750.9599999999999px;width:13.0px;height:13.0px;background:#fff;border:1px solid #d4d4d4;box-sizing:border-box;border-radius:2px"></div>
<div class="t" style="left:456px;top:748.16px;height:20px;line-height:20px;font-size:13px;color:#333;">2020</div>
<svg style="left:589px;top:749.40px" width="73" height="23"><rect width="73" height="23" fill="#eeeeee" filter="url(#nz)"/></svg>
<div class="t" style="left:750.5px;top:748.16px;height:20px;line-height:20px;font-size:13px;color:#333;">255</div>
<div class="t" style="left:897px;top:748.16px;height:20px;line-height:20px;font-size:13px;color:#333;">2021-07-26 17:06:53</div>
<div class="t" style="left:1044px;top:747.76px;height:20px;line-height:20px;font-size:13px;color:#333;">公开</div>
<div class="t" style="left:1338.5px;top:748.16px;height:20px;line-height:20px;font-size:13px;color:#333;">0</div>
<div class="t" style="left:1543.7px;top:747.9599999999999px;height:20px;line-height:20px;font-size:13px;color:#3d5cb8;">阅览</div>
<div class="t" style="left:1578.3px;top:747.9599999999999px;height:20px;line-height:20px;font-size:13px;color:#3d5cb8;">修改</div>
<div class="t" style="left:1612.8px;top:747.9599999999999px;height:20px;line-height:20px;font-size:13px;color:#3d5cb8;">预归档</div>
<div style="left:1660.0px;top:756.36px;width:3.2000000000000455px;height:2.7999999999999545px;background:#444"></div>
<div style="left:1664.3px;top:756.36px;width:3.2000000000000455px;height:2.7999999999999545px;background:#444"></div>
<div style="left:1668.6px;top:756.36px;width:3.2000000000000455px;height:2.7999999999999545px;background:#444"></div>
<div style="left:402px;top:826.2299999999999px;width:1313px;height:2.2000000000000455px;background:#e9e9e9"></div>
<div style="left:418.3px;top:797.8299999999999px;width:13.0px;height:13.0px;background:#fff;border:1px solid #d4d4d4;box-sizing:border-box;border-radius:2px"></div>
<div class="t" style="left:456px;top:795.03px;height:20px;line-height:20px;font-size:13px;color:#333;">2020</div>
<svg style="left:589px;top:796.60px" width="73" height="23"><rect width="73" height="23" fill="#eeeeee" filter="url(#nz)"/></svg>
<div class="t" style="left:750.5px;top:795.03px;height:20px;line-height:20px;font-size:13px;color:#333;">255</div>
<div class="t" style="left:897px;top:795.03px;height:20px;line-height:20px;font-size:13px;color:#333;">2021-07-26 17:06:52</div>
<div class="t" style="left:1044px;top:794.63px;height:20px;line-height:20px;font-size:13px;color:#333;">公开</div>
<div class="t" style="left:1338.5px;top:795.03px;height:20px;line-height:20px;font-size:13px;color:#333;">0</div>
<div class="t" style="left:1543.7px;top:794.8299999999999px;height:20px;line-height:20px;font-size:13px;color:#3d5cb8;">阅览</div>
<div class="t" style="left:1578.3px;top:794.8299999999999px;height:20px;line-height:20px;font-size:13px;color:#3d5cb8;">修改</div>
<div class="t" style="left:1612.8px;top:794.8299999999999px;height:20px;line-height:20px;font-size:13px;color:#3d5cb8;">预归档</div>
<div style="left:1660.0px;top:803.23px;width:3.2000000000000455px;height:2.7999999999999545px;background:#444"></div>
<div style="left:1664.3px;top:803.23px;width:3.2000000000000455px;height:2.7999999999999545px;background:#444"></div>
<div style="left:1668.6px;top:803.23px;width:3.2000000000000455px;height:2.7999999999999545px;background:#444"></div>
<div style="left:402px;top:835.9px;width:1329px;height:1.6000000000000227px;background:#eef0f6"></div>
<div style="left:1715px;top:359px;width:17px;height:477px;background:#f1f1f1"></div>
<div style="left:1715.3px;top:375.5px;width:14.700000000000045px;height:293.5px;background:#cbcbcb"></div>
<svg style="left:1719.0px;top:364.0px;" width="9" height="7" viewBox="0 0 9 7"><path d="M1 5.6 L4.5 1.6 L8 5.6" fill="none" stroke="#444" stroke-width="1.6"/></svg>
<svg style="left:1719.0px;top:826.0px;" width="9" height="7" viewBox="0 0 9 7"><path d="M1 1.4 L4.5 5.4 L8 1.4" fill="none" stroke="#444" stroke-width="1.6"/></svg>
<div class="t" style="left:823.3px;top:856.3px;height:20px;line-height:20px;font-size:12.3px;color:#666;">共 56 条</div>
<div style="left:881.3px;top:852.3px;width:90.0px;height:27.300000000000068px;background:#fff;border:1px solid #dcdcdc;box-sizing:border-box;border-radius:2px"></div>
<div class="t" style="left:897.5px;top:856.5px;height:20px;line-height:20px;font-size:13.2px;color:#666;font-family:'Liberation Serif',serif">15条/页</div>
<svg style="left:948.0px;top:863.3px;" width="8" height="5.4" viewBox="0 0 8 5.4"><path d="M1 1 L4.0 4.4 L7 1" fill="none" stroke="#c0c0c0" stroke-width="1"/></svg>
<div style="left:990px;top:852.4px;width:27px;height:27.0px;background:#f3f3f3;border-radius:2px"></div>
<svg style="left:1000.2px;top:861.5px;" width="7" height="9" viewBox="0 0 7 9"><path d="M4.8 1.2 L2 4.5 L4.8 7.8" fill="none" stroke="#c2c2c2" stroke-width="1.3"/></svg>
<div style="left:1026.4px;top:852.4px;width:27.0px;height:27.0px;background:#2b4cab;border-radius:2px"></div>
<div class="t" style="left:939.9000000000001px;width:200px;text-align:center;top:856.9px;height:20px;line-height:20px;font-size:12.5px;color:#fff;font-weight:bold">1</div>
<div style="left:1062.4px;top:852.4px;width:27.0px;height:27.0px;background:#f3f3f3;border-radius:2px"></div>
<div class="t" style="left:975.9000000000001px;width:200px;text-align:center;top:856.9px;height:20px;line-height:20px;font-size:12.5px;color:#333;font-weight:bold">2</div>
<div style="left:1099px;top:852.4px;width:27px;height:27.0px;background:#f3f3f3;border-radius:2px"></div>
<div class="t" style="left:1012.5px;width:200px;text-align:center;top:856.9px;height:20px;line-height:20px;font-size:12.5px;color:#333;font-weight:bold">3</div>
<div style="left:1135px;top:852.4px;width:27px;height:27.0px;background:#f3f3f3;border-radius:2px"></div>
<div class="t" style="left:1048.5px;width:200px;text-align:center;top:856.9px;height:20px;line-height:20px;font-size:12.5px;color:#333;font-weight:bold">4</div>
<div style="left:1172px;top:852.4px;width:27px;height:27.0px;background:#f3f3f3;border-radius:2px"></div>
<svg style="left:1182.0px;top:861.5px;" width="7" height="9" viewBox="0 0 7 9"><path d="M2.2 1.2 L5 4.5 L2.2 7.8" fill="none" stroke="#333" stroke-width="1.6"/></svg>
<div class="t" style="left:1224.8px;top:856.8px;height:20px;line-height:20px;font-size:12px;color:#666;">前往</div>
<div style="left:1252.5px;top:852.6px;width:41.200000000000045px;height:26.699999999999932px;background:#fff;border:1px solid #dcdcdc;box-sizing:border-box;border-radius:2px"></div>
<div class="t" style="left:1173px;width:200px;text-align:center;top:856.5px;height:20px;line-height:20px;font-size:12.5px;color:#555;font-family:'Liberation Serif',serif">1</div>
<div class="t" style="left:1297.5px;top:856.8px;height:20px;line-height:20px;font-size:12px;color:#666;">页</div>
</div></div></div>
</body></html>
